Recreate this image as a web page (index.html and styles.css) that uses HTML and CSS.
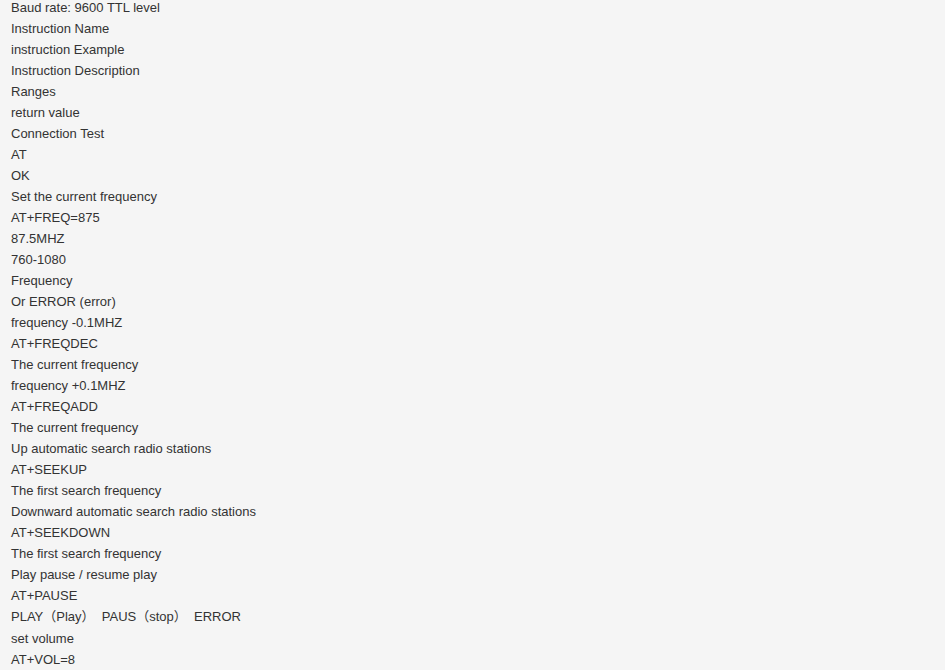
FILE: index.html
```html
<!DOCTYPE html>
<html lang="en">
<head>
<meta charset="UTF-8" />
<title>AT instructions</title>
<link rel="stylesheet" href="styles.css">
</head>
<body>
<div class="spec">
<p>Baud rate: 9600 TTL level</p>
<p>Instruction Name</p>
<p>instruction Example</p>
<p>Instruction Description</p>
<p>Ranges</p>
<p>return value</p>
<p>Connection Test</p>
<p>AT</p>
<p>OK</p>
<p>Set the current frequency</p>
<p>AT+FREQ=875</p>
<p>87.5MHZ</p>
<p>760-1080</p>
<p>Frequency</p>
<p>Or ERROR (error)</p>
<p>frequency -0.1MHZ</p>
<p>AT+FREQDEC</p>
<p>The current frequency</p>
<p>frequency +0.1MHZ</p>
<p>AT+FREQADD</p>
<p>The current frequency</p>
<p>Up automatic search radio stations</p>
<p>AT+SEEKUP</p>
<p>The first search frequency</p>
<p>Downward automatic search radio stations</p>
<p>AT+SEEKDOWN</p>
<p>The first search frequency</p>
<p>Play pause / resume play</p>
<p>AT+PAUSE</p>
<p class="wide">PLAY（Play）&nbsp; PAUS（stop）&nbsp; ERROR</p>
<p>set volume</p>
<p>AT+VOL=8</p>
</div>
</body>
</html>
```
FILE: styles.css
```css
body {
  margin: 0;
  background-color: #f5f5f5;
  font-family: "Liberation Sans", Arial, "Noto Sans CJK SC", sans-serif;
  font-size: 13px;
  color: #333;
}
.spec {
  padding: 0 11px;
  margin-top: -3px;
}
.spec p {
  margin: 0;
  line-height: 21px;
}
.spec .wide {
  line-height: 22px;
}
```
